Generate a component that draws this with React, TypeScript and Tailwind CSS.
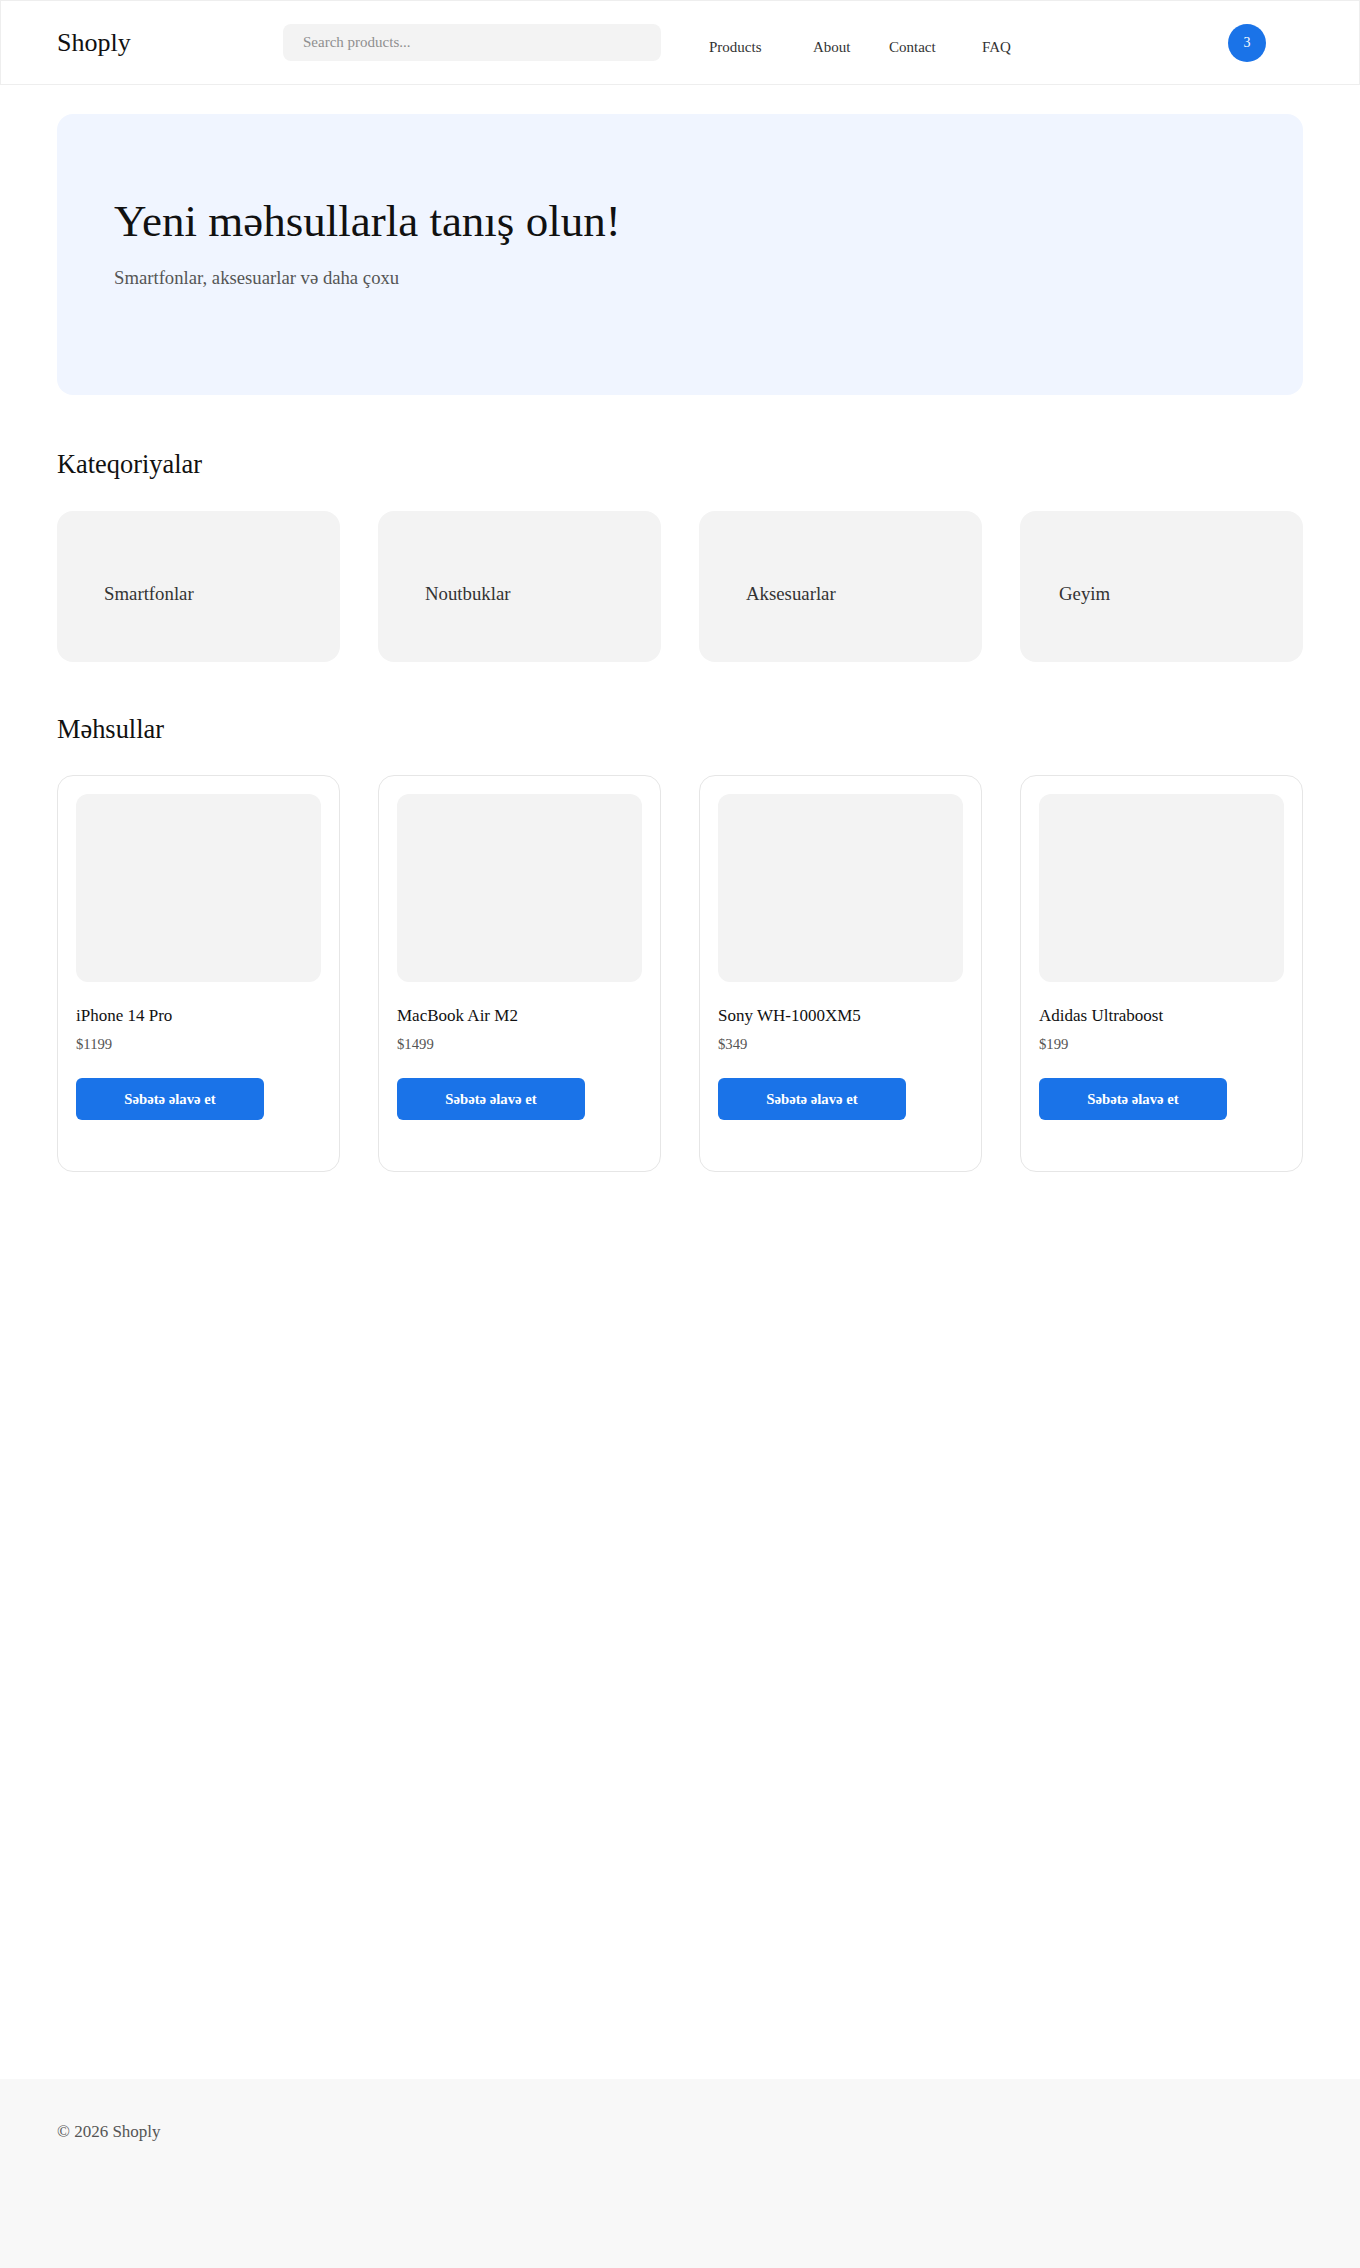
import { FC } from "react";

interface Product {
  id: number;
  title: string;
  price: number;
}

interface Category {
  title: string;
  pad: string;
}

// Geyim sits a bit closer to the edge in the design
const categories: Category[] = [
  { title: "Smartfonlar", pad: "pl-[47px]" },
  { title: "Noutbuklar", pad: "pl-[47px]" },
  { title: "Aksesuarlar", pad: "pl-[47px]" },
  { title: "Geyim", pad: "pl-[39px]" },
];

const products: Product[] = [
  { id: 1, title: "iPhone 14 Pro", price: 1199 },
  { id: 2, title: "MacBook Air M2", price: 1499 },
  { id: 3, title: "Sony WH-1000XM5", price: 349 },
  { id: 4, title: "Adidas Ultraboost", price: 199 },
];

const Header: FC = () => {
  return (
    <header className="h-[85px] border border-[#eeeeee] flex items-center px-[56px]">
      {/* Logo */}
      <div className="w-[226px] text-[26px] leading-none text-[#111]">Shoply</div>

      {/* Search */}
      <input
        type="text"
        placeholder="Search products..."
        className="w-[378px] h-[37px] rounded-lg bg-[#f3f3f3] pl-[20px] text-[15px] text-[#333] placeholder:text-[#8f8f8f] outline-none"
      />

      {/* Nav */}
      <nav className="flex items-center mt-[10px] ml-[48px] text-[15px] text-[#333]">
        <a href="#" className="w-[104px]">
          Products
        </a>
        <a href="#" className="w-[76px]">
          About
        </a>
        <a href="#" className="w-[93px]">
          Contact
        </a>
        <a href="#">FAQ</a>
      </nav>

      {/* Cart */}
      <button
        type="button"
        className="ml-auto mr-[37px] w-[38px] h-[38px] rounded-full bg-[#1a73e8] text-white text-[14px] flex items-center justify-center"
      >
        3
      </button>
    </header>
  );
};

const ProductCard: FC<{ product: Product }> = ({ product }) => {
  return (
    <div className="border border-[#e6e6e6] rounded-2xl p-[18px] pb-[51px]">
      <div className="h-[188px] rounded-xl bg-[#f3f3f3]" />
      <p className="mt-[24px] text-[17px] leading-[19px] text-[#111]">{product.title}</p>
      <p className="mt-[11px] text-[14.7px] leading-[16px] text-[#555]">${product.price}</p>
      <button
        type="button"
        className="mt-[26px] w-[188px] h-[42px] rounded-md bg-[#1a73e8] text-white text-[14.7px] font-bold"
      >
        Səbətə əlavə et
      </button>
    </div>
  );
};

export default function App() {
  return (
    <div className="min-h-screen flex flex-col bg-white font-['Liberation_Serif',serif]">
      <Header />

      <main className="flex-1 px-[57px] pt-[29px]">
        {/* Hero */}
        <section className="h-[281px] rounded-2xl bg-[#f0f5ff] pl-[57px] pt-[83px]">
          <h1 className="text-[45px] leading-[49px] text-[#111]">Yeni məhsullarla tanış olun!</h1>
          <p className="mt-[21px] text-[18.7px] leading-[21px] text-[#555]">
            Smartfonlar, aksesuarlar və daha çoxu
          </p>
        </section>

        {/* Categories */}
        <h2 className="mt-[55px] text-[26.4px] leading-[29px] text-[#111]">Kateqoriyalar</h2>
        <div className="mt-[32px] grid grid-cols-4 gap-[38px]">
          {categories.map((category) => (
            <div
              key={category.title}
              className={`h-[151px] rounded-2xl bg-[#f3f3f3] pt-[72px] text-[18.8px] leading-[21px] text-[#333] ${category.pad}`}
            >
              {category.title}
            </div>
          ))}
        </div>

        {/* Products */}
        <h2 className="mt-[53px] text-[26.4px] leading-[29px] text-[#111]">Məhsullar</h2>
        <div className="mt-[31px] grid grid-cols-4 gap-[38px]">
          {products.map((product) => (
            <ProductCard key={product.id} product={product} />
          ))}
        </div>
      </main>

      <footer className="h-[189px] bg-[#f8f8f8] px-[57px] pt-[40px] text-[17px] text-[#555]">
        © 2026 Shoply
      </footer>
    </div>
  );
}
